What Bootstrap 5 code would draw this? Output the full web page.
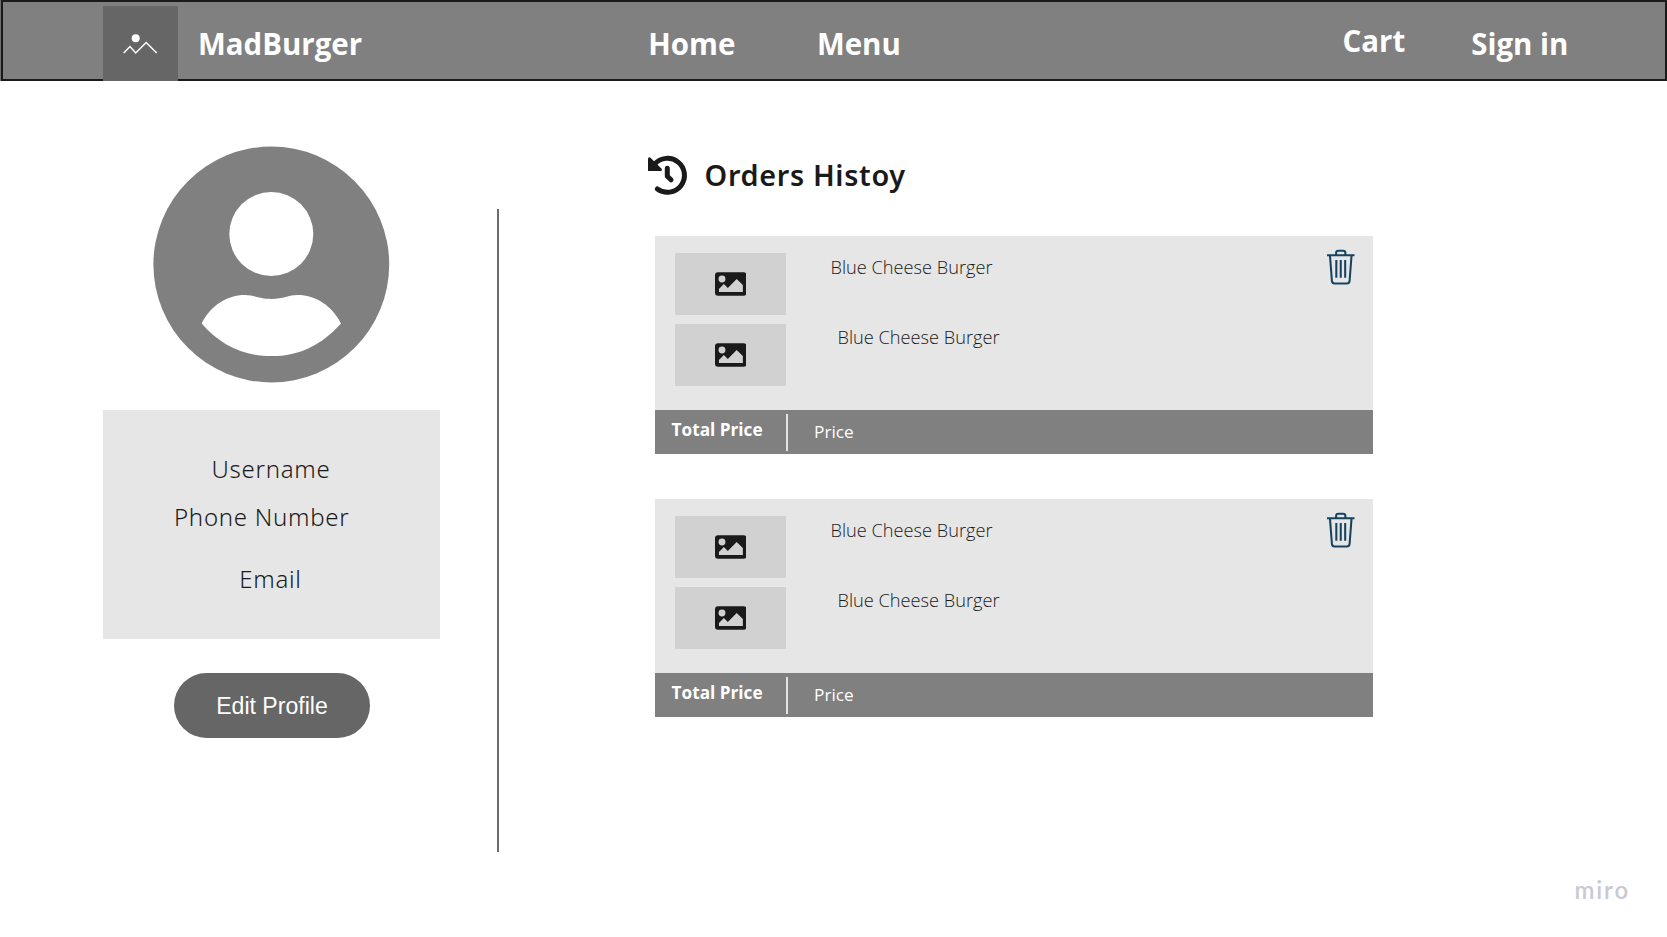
<!DOCTYPE html>
<html lang="en">
<head>
<meta charset="utf-8">
<meta name="viewport" content="width=device-width, initial-scale=1">
<title>MadBurger</title>
<link href="https://cdn.jsdelivr.net/npm/bootstrap@5.3.0/dist/css/bootstrap.min.css" rel="stylesheet">
<style>
  body { font-family: "Open Sans", sans-serif; color: #1a1a1a; background: #fff; height: 937px; overflow: hidden; }
  .topbar { height: 80.5px; margin-left: 1px; background: #808080; border: 2px solid #1a1a1a; box-shadow: -1px 0 #707070; padding: 0;
    display: grid; grid-template-columns: 99.7px 95.3px 450.3px 168.7px 525.6px 128.7px 1fr; align-items: start; }
  .topbar a { font-size: 29.45px; font-weight: 700; line-height: 40px; color: #fff; margin-top: 21.6px; text-decoration: none; white-space: nowrap; }
  .topbar a.cart { margin-top: 18.6px; }
  .logo { width: 75.3px; height: 75.3px; margin-top: 3.5px; background: #666; }
  .logo svg, .avatar, .thumb svg, .trash { display: block; }
  .profile { width: 337px; margin-left: 103px; padding-top: 65.3px; }
  .avatar { margin-left: 50px; }
  .details { height: 229px; margin-top: 27.2px; background: #e6e6e6; padding-top: 44.4px; font-family: "Noto Sans", sans-serif; font-weight: 300; font-size: 24px; line-height: 30px; letter-spacing: .72px; white-space: nowrap; }
  .username { padding-left: 108.5px; }
  .phone { padding: 18px 0 0 71px; }
  .email { padding: 32px 0 0 136.3px; }
  .edit { width: 196px; height: 65.5px; margin: 33.8px 0 0 70.5px; background: #666; color: #fff; font: 23.1px/1 "Liberation Sans", sans-serif; }
  .edit span { display: block; padding: 2px 0 0 1px; }
  .rule { width: 2px; height: 643px; margin: 128.5px 0 0 57px; background: #6b6d6f; }
  .orders { width: 725px; margin-left: 149px; padding-top: 74px; }
  .orders h1 { font-family: "Noto Sans", sans-serif; font-size: 28.8px; font-weight: 600; line-height: 40px; letter-spacing: .67px; margin: 0 0 0 16.6px; }
  .order { width: 718px; margin: 39.5px 0 0 7px; }
  .order + .order { margin-top: 45px; }
  .items { height: 174px; background: #e6e6e6; padding: 16.6px 17.5px 0 20px; }
  .thumbs { gap: 9px; }
  .thumb { width: 110.8px; height: 62.4px; background: #d1d1d1; }
  .dishes { margin-left: 44.8px; padding-top: 2.4px; }
  .dish { font-size: 18.2px; font-weight: 300; line-height: 24px; white-space: nowrap; }
  .dish + .dish { padding: 46px 0 0 7px; }
  .trash { margin-top: -3.5px; }
  .total { height: 44px; background: #808080; color: #fff; line-height: 24px; }
  .total b { font-size: 17.2px; font-weight: 700; width: 114.4px; margin: 7.8px 0 0 16.6px; }
  .total i { width: 2px; height: 36.5px; margin-top: 4px; background: #e3e3e3; }
  .total span { font-size: 17.2px; margin: 9.8px 0 0 26.1px; }
  .watermark { position: absolute; right: 37px; bottom: 32.4px; font: 600 24px/30px Lato, sans-serif; letter-spacing: 1.9px; color: #c9c9d3; }
</style>
</head>
<body>
<svg width="0" height="0" class="position-absolute">
  <symbol id="picture" viewBox="0 0 32 24">
    <path fill="#1a1a1a" fill-rule="evenodd" d="M3 0H29A3 3 0 0 1 32 3V21A3 3 0 0 1 29 24H3A3 3 0 0 1 0 21V3A3 3 0 0 1 3 0ZM7.1 3.4A3.5 3.5 0 1 0 7.1 10.4A3.5 3.5 0 1 0 7.1 3.4ZM4 20H28.3V13L22 6.8L13 16L9 12L4 17Z"/>
  </symbol>
  <symbol id="bin" viewBox="0 0 30 36">
    <g fill="none" stroke="#16435f" stroke-width="2.1">
      <path d="M1 6H29M10.3 5.5V3.8Q10.3 1.5 12.6 1.5H17.4Q19.7 1.5 19.7 3.8V5.5"/>
      <path d="M4 6L6 32Q6.3 34.7 8.8 34.7H21.2Q23.7 34.7 24 32L26 6"/>
      <path d="M10.5 11V29M15 11V29M19.5 11V29"/>
    </g>
  </symbol>
</svg>

<nav class="topbar">
  <span></span>
  <div class="logo">
    <svg width="75" height="75" viewBox="0 0 75 75"><circle cx="32.7" cy="32.3" r="4" fill="#fff"/><path d="M20.7 47L27 40.5L32.7 47L43.2 36.5L53.7 47" fill="none" stroke="#fff" stroke-width="1.5"/></svg>
  </div>
  <a href="#">MadBurger</a>
  <a href="#">Home</a>
  <a href="#">Menu</a>
  <a href="#" class="cart">Cart</a>
  <a href="#">Sign in</a>
</nav>

<main class="d-flex align-items-start">
  <section class="profile">
    <svg class="avatar" width="237" height="237" viewBox="0 0 237 237">
      <circle cx="118.3" cy="118.5" r="117.9" fill="#808080"/>
      <circle cx="118.3" cy="88" r="42" fill="#fff"/>
      <path fill="#fff" d="M48.7 177.4C58 159.400 74 149.100 92 149.100C101 149.100 106 153 118.300 153C130.600 153 135.600 149.100 144.600 149.100C162.600 149.100 178.600 159.400 188 177.400C169 198.400 147 210.100 118.300 210.100C89.600 210.100 67 198.400 48.700 177.400Z"/>
    </svg>
    <div class="details">
      <div class="username">Username</div>
      <div class="phone">Phone Number</div>
      <div class="email">Email</div>
    </div>
    <button class="edit btn rounded-pill border-0 p-0 d-block"><span>Edit Profile</span></button>
  </section>

  <div class="rule"></div>

  <section class="orders">
    <header class="d-flex align-items-start">
      <svg width="40" height="42" viewBox="0 0 40 42">
        <g fill="none" stroke="#1a1a1a" stroke-width="5" stroke-linecap="round" stroke-linejoin="round">
          <path d="M6.5 9.3A17 17 0 1 1 9.4 34"/>
          <path d="M19.3 13.3V21.3L23 24.8"/>
        </g>
        <path fill="#1a1a1a" d="M0 3.6Q0.8 1.6 2.5 2.8L13.6 13.8Q14.6 15.8 12.5 16H0Z"/>
      </svg>
      <h1>Orders Histoy</h1>
    </header>

    <article class="order">
      <div class="items d-flex">
        <div class="thumbs d-grid align-content-start">
          <div class="thumb d-flex align-items-center justify-content-center"><svg width="31.5" height="24"><use href="#picture"/></svg></div>
          <div class="thumb d-flex align-items-center justify-content-center"><svg width="31.5" height="24"><use href="#picture"/></svg></div>
        </div>
        <div class="dishes">
          <div class="dish">Blue Cheese Burger</div>
          <div class="dish">Blue Cheese Burger</div>
        </div>
        <svg class="trash ms-auto" width="29.5" height="36"><use href="#bin"/></svg>
      </div>
      <div class="total d-flex"><b>Total Price</b><i></i><span>Price</span></div>
    </article>

    <article class="order">
      <div class="items d-flex">
        <div class="thumbs d-grid align-content-start">
          <div class="thumb d-flex align-items-center justify-content-center"><svg width="31.5" height="24"><use href="#picture"/></svg></div>
          <div class="thumb d-flex align-items-center justify-content-center"><svg width="31.5" height="24"><use href="#picture"/></svg></div>
        </div>
        <div class="dishes">
          <div class="dish">Blue Cheese Burger</div>
          <div class="dish">Blue Cheese Burger</div>
        </div>
        <svg class="trash ms-auto" width="29.5" height="36"><use href="#bin"/></svg>
      </div>
      <div class="total d-flex"><b>Total Price</b><i></i><span>Price</span></div>
    </article>
  </section>
</main>

<div class="watermark">miro</div>
<script src="https://cdn.jsdelivr.net/npm/bootstrap@5.3.0/dist/js/bootstrap.bundle.min.js"></script>
</body>
</html>
